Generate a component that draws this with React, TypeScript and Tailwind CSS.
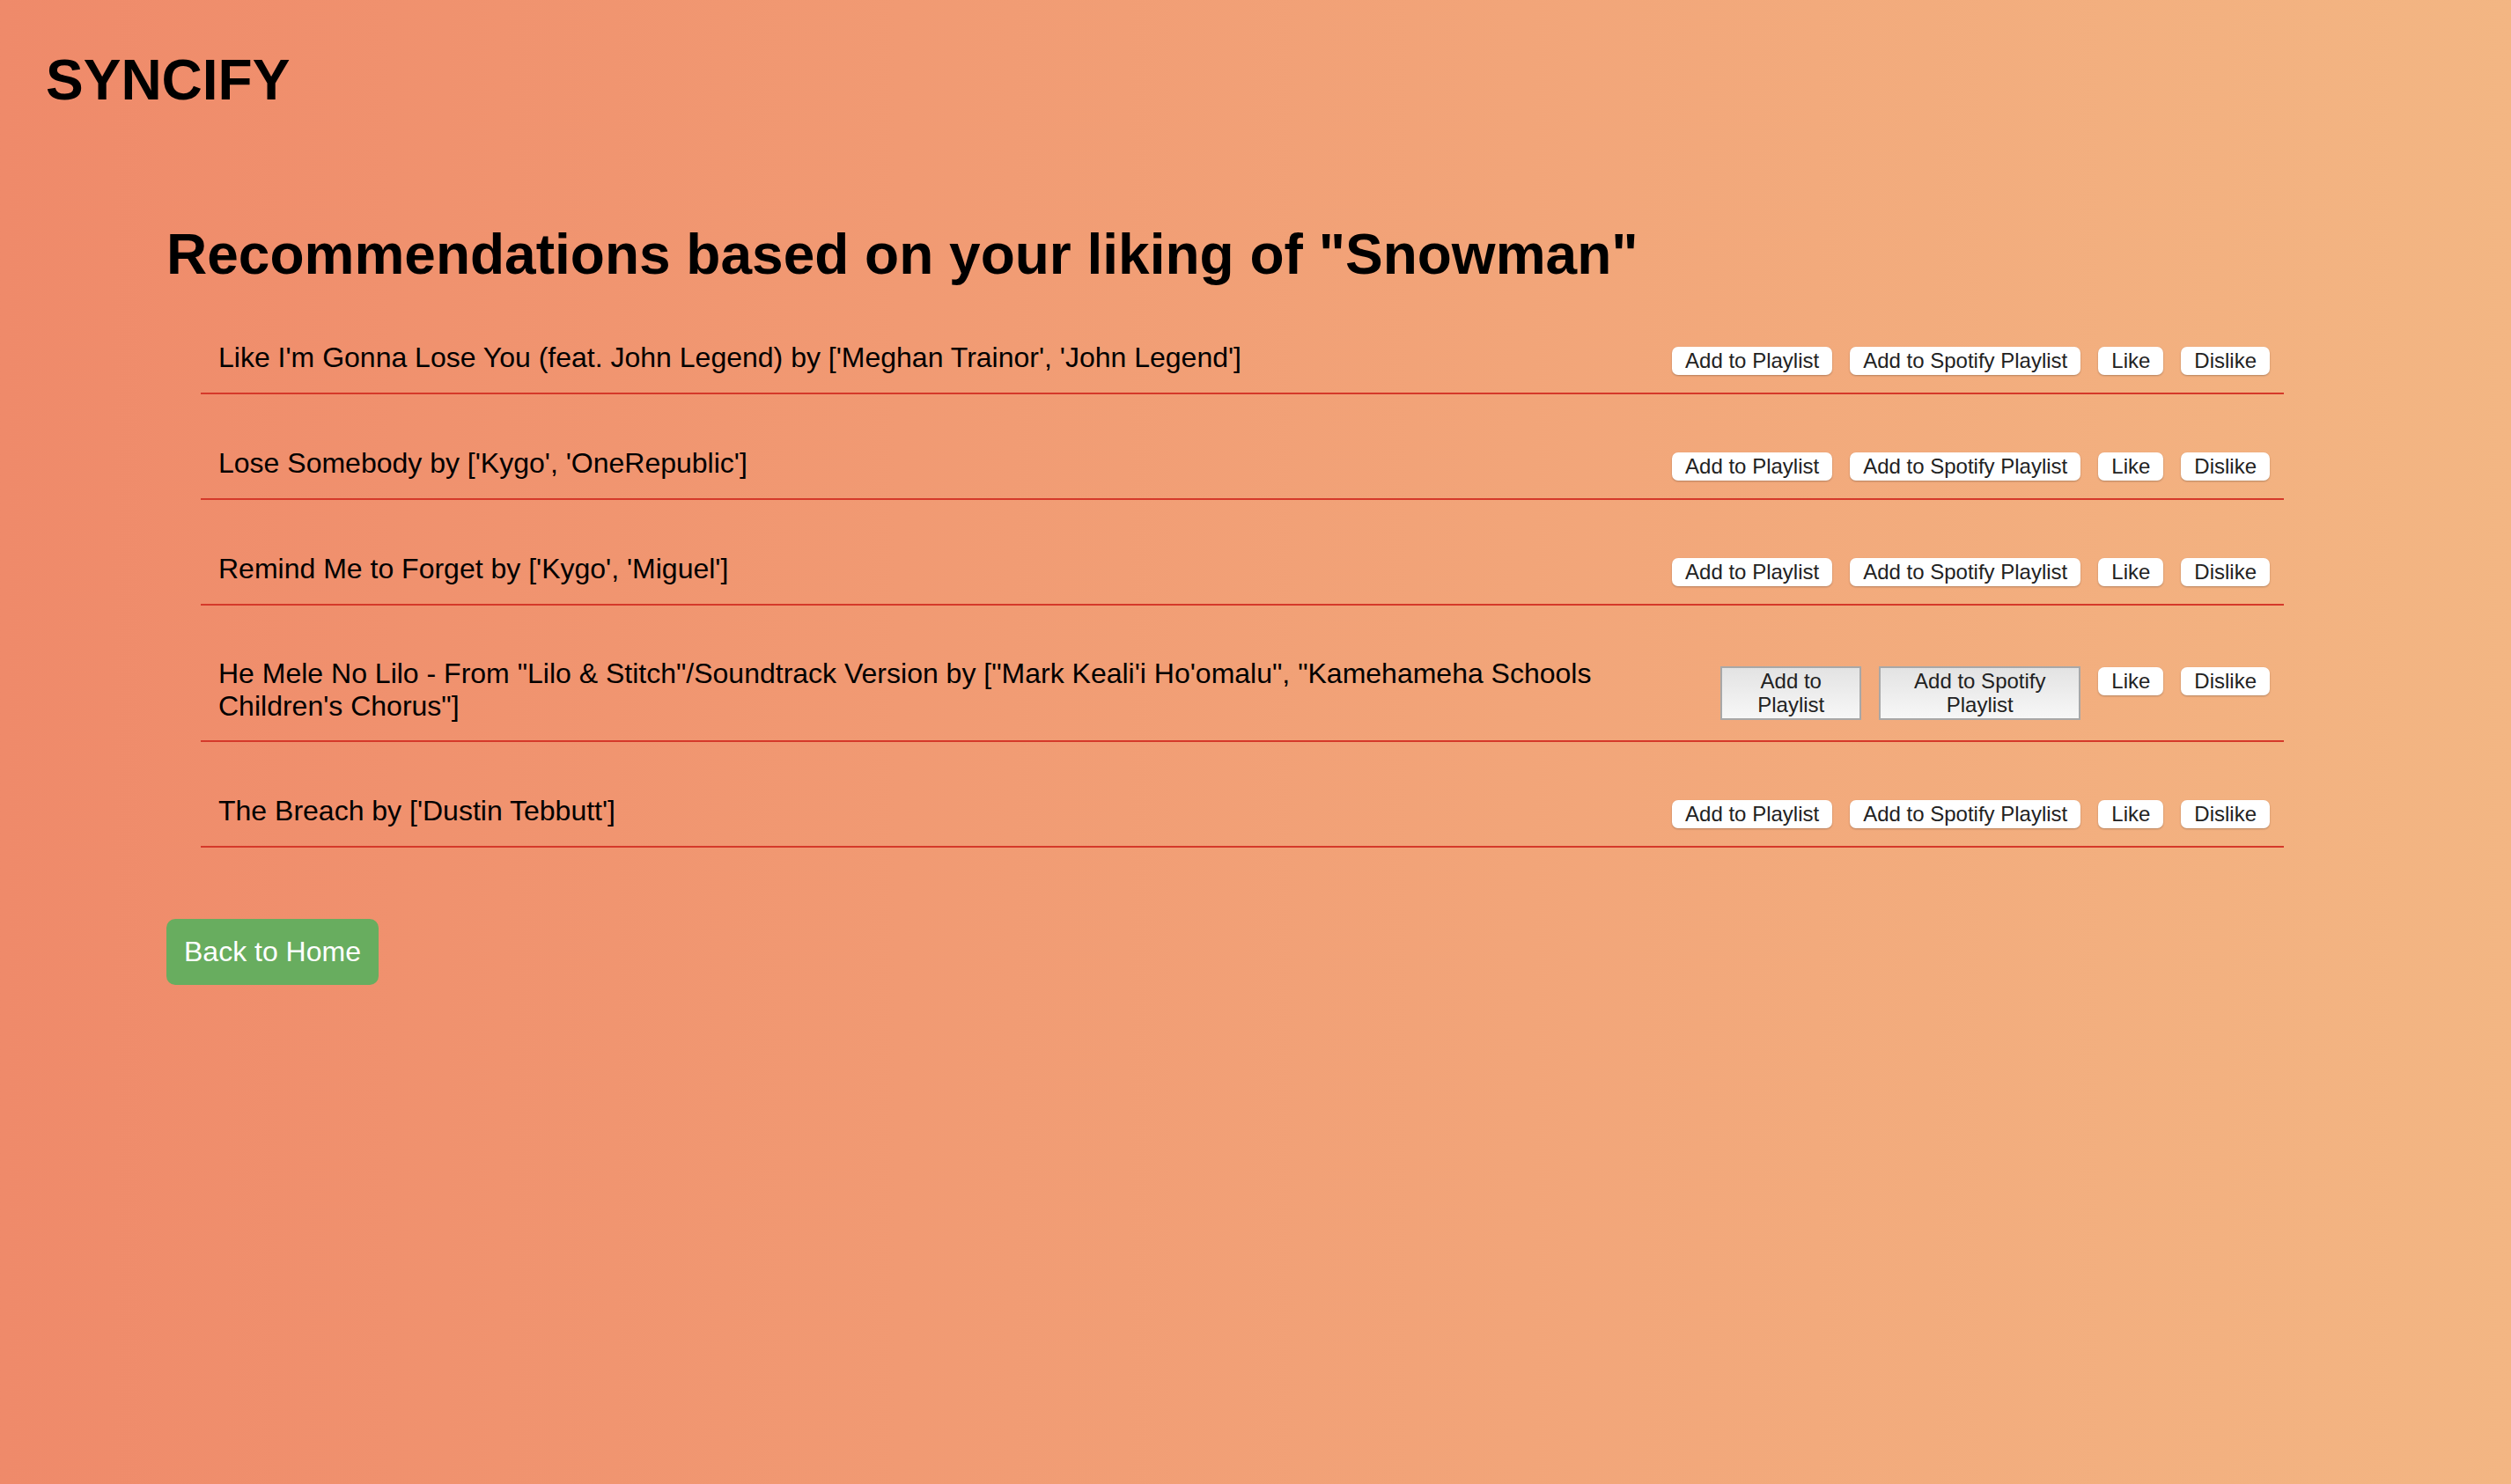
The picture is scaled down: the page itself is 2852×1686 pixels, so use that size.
import React from "react";

type Track = {
  title: string;
  wrapped?: boolean;
};

const tracks: Track[] = [
  { title: "Like I'm Gonna Lose You (feat. John Legend) by ['Meghan Trainor', 'John Legend']" },
  { title: "Lose Somebody by ['Kygo', 'OneRepublic']" },
  { title: "Remind Me to Forget by ['Kygo', 'Miguel']" },
  {
    title:
      "He Mele No Lilo - From \"Lilo & Stitch\"/Soundtrack Version by [\"Mark Keali'i Ho'omalu\", \"Kamehameha Schools Children's Chorus\"]",
    wrapped: true,
  },
  { title: "The Breach by ['Dustin Tebbutt']" },
];

function PillButton({ children }: { children: React.ReactNode }) {
  return (
    <button className="h-[32px] whitespace-nowrap rounded-[7px] bg-white px-[15px] text-[24px] leading-[28px] text-[#222] shadow-[0_1px_2px_rgba(0,0,0,0.25)]">
      {children}
    </button>
  );
}

function SquareButton({ children, width }: { children: React.ReactNode; width: string }) {
  return (
    <button
      className={`h-[61px] border-2 border-[#a8a8a8] bg-linear-to-b from-[#e3e3e3] to-[#f7f7f7] px-[6px] text-center text-[24px] leading-[27px] text-[#222] ${width}`}
    >
      {children}
    </button>
  );
}

function TrackRow({ track }: { track: Track }) {
  return (
    <li className="mb-[39px] flex min-h-[81px] items-center gap-[20px] border-b-2 border-[#d5392a] py-[20px] pl-[20px] pr-[16px]">
      <span className="min-w-0 flex-1 text-[32px] leading-[37px]">{track.title}</span>
      <div className="mt-[6px] flex shrink-0 items-baseline gap-[20px]">
        {track.wrapped ? (
          <>
            <SquareButton width="w-[160px]">Add to Playlist</SquareButton>
            <SquareButton width="w-[229px]">Add to Spotify Playlist</SquareButton>
          </>
        ) : (
          <>
            <PillButton>Add to Playlist</PillButton>
            <PillButton>Add to Spotify Playlist</PillButton>
          </>
        )}
        <PillButton>Like</PillButton>
        <PillButton>Dislike</PillButton>
      </div>
    </li>
  );
}

export default function App() {
  return (
    <div className="min-h-screen bg-linear-to-r from-[#ef8a6a] to-[#f3b683] font-['Liberation_Sans',Arial,sans-serif] text-black">
      <header className="pl-[52px] pt-[54px]">
        <h1 className="text-[64px] font-bold leading-[74px]">SYNCIFY</h1>
      </header>

      <main className="pl-[189px] pt-[124px] pb-[40px]">
        <h2 className="text-[64px] font-bold leading-[74px]">
          Recommendations based on your liking of "Snowman"
        </h2>

        <ul className="ml-[39px] mt-[41px] flex w-[2366px] flex-col">
          {tracks.map((t) => (
            <TrackRow key={t.title} track={t} />
          ))}
        </ul>

        <button className="mt-[42px] block rounded-[10px] bg-[#68ad5f] px-[20px] py-[19px] text-[32px] leading-[37px] text-white">
          Back to Home
        </button>
      </main>
    </div>
  );
}
